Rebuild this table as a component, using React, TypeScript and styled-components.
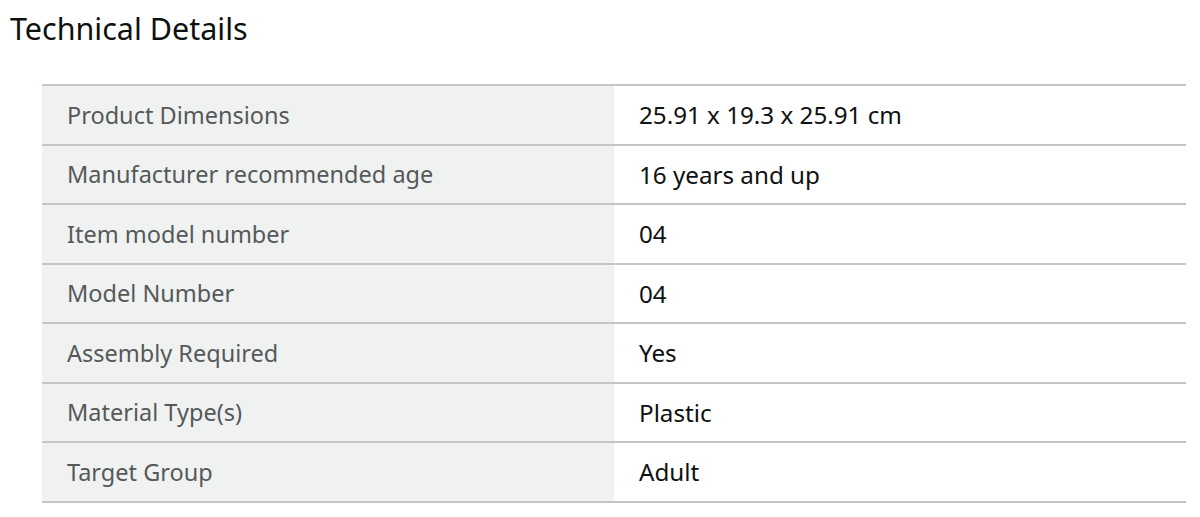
import React from "react";
import styled, { createGlobalStyle } from "styled-components";

const Global = createGlobalStyle`
  html, body { margin: 0; padding: 0; background: #fff; }
  body { font-family: "Noto Sans", "Open Sans", Arial, sans-serif; }
`;

const Page = styled.div`
  padding: 8px 14px 0 10px;
`;

const Title = styled.h2`
  margin: 0;
  font-size: 30.5px;
  font-weight: 400;
  line-height: 40px;
  color: #0f1111;
`;

const Table = styled.table`
  margin: 36px 0 0 32px;
  width: 1144px;
  border-collapse: collapse;
  table-layout: fixed;
  border-bottom: 2px solid #c4c6c6;
`;

const Row = styled.tr`
  border-top: 2px solid #c4c6c6;
`;

const Cell = styled.td<{ $head?: boolean }>`
  height: 57.5px;
  padding: 0 25px;
  font-size: ${(p) => (p.$head ? "23.5px" : "24.2px")};
  vertical-align: middle;
  background: ${(p) => (p.$head ? "#f0f2f2" : "#fff")};
  color: ${(p) => (p.$head ? "#565959" : "#0f1111")};
`;

const rows: [string, string][] = [
  ["Product Dimensions", "25.91 x 19.3 x 25.91 cm"],
  ["Manufacturer recommended age", "16 years and up"],
  ["Item model number", "04"],
  ["Model Number", "04"],
  ["Assembly Required", "Yes"],
  ["Material Type(s)", "Plastic"],
  ["Target Group", "Adult"],
];

export default function App() {
  return (
    <Page>
      <Global />
      <Title>Technical Details</Title>
      <Table>
        <tbody>
          {rows.map(([k, v]) => (
            <Row key={k}>
              <Cell $head>{k}</Cell>
              <Cell>{v}</Cell>
            </Row>
          ))}
        </tbody>
      </Table>
    </Page>
  );
}
